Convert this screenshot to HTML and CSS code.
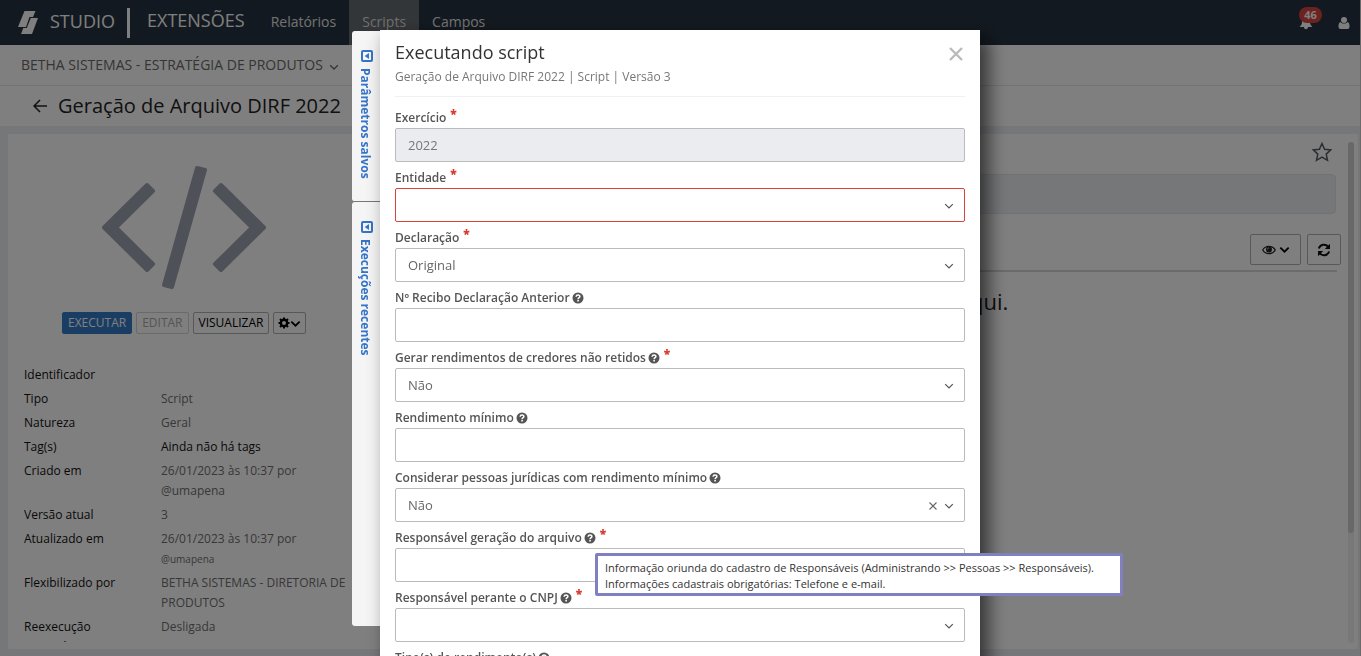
FILE: index.html
```html
<!DOCTYPE html>
<html lang="pt-BR">
<head>
<meta charset="utf-8">
<title>Studio Extensões</title>
<link rel="stylesheet" href="styles.css">
</head>
<body>
<svg class="defs" aria-hidden="true">
  <symbol id="chevron" viewBox="0 0 10 10"><path d="M1.200 3.200 5 7l3.800-3.800" fill="none" stroke="currentColor"/></symbol>
  <symbol id="help" viewBox="0 0 12 12"><circle cx="6" cy="6" r="5.500" fill="currentColor"/><path d="M4.100 4.700C4.200 2.500 8 2.500 7.900 4.600 7.800 5.800 6.100 5.700 6.100 7.200" fill="none" stroke="#fff" stroke-width="1.500"/><rect x="5.300" y="8" width="1.600" height="1.500" fill="#fff"/></symbol>
  <symbol id="panel" viewBox="0 0 12 12"><rect x="1" y="1" width="10" height="10" rx="1" fill="none" stroke="currentColor" stroke-width="2"/><path d="M8 3v6L3.700 6z" fill="currentColor"/></symbol>
</svg>
<div class="app">
  <header class="topbar">
    <svg class="logo" viewBox="0 0 20 24"><path d="M6.500 0H17.500L15 6H11.500L8 16H0z M12.800 7H20L14 23H3l2.300-6h3.500z" fill="#fff"/></svg>
    <span class="brand">STUDIO</span>
    <span class="product">EXTENSÕES</span>
    <nav class="nav">
      <a href="#">Relatórios</a>
      <a href="#" class="current">Scripts</a>
      <a href="#">Campos</a>
    </nav>
    <button class="bell" aria-label="Notificações">
      <svg viewBox="0 0 14 14"><path d="M7 1c3 0 4 2 4 4.500 0 3 1 4 2.500 5.500H.5C2 9.500 3 8.500 3 5.500 3 3 4 1 7 1zM5 11h4c0 3-4 3-4 0z" fill="#fff"/></svg>
      <span class="badge">46</span>
    </button>
    <button class="user" aria-label="Usuário"><svg viewBox="0 0 12 12"><circle cx="6" cy="3" r="3" fill="#fff"/><path d="M2.500 5c-2 .5-2 3-2 4.500C.5 11 1 12 2.500 12h7c1.500 0 2-1 2-2.500 0-1.500 0-4-2-4.500-1.500 2-5.500 2-7 0z" fill="#fff"/></svg></button>
  </header>
  <div class="entity">BETHA SISTEMAS - ESTRATÉGIA DE PRODUTOS <svg><use href="#chevron"/></svg></div>
  <div class="heading">
    <a href="#" aria-label="Voltar"><svg viewBox="0 0 14 14"><path d="M7 1 1 7l6 6M1 7h13" fill="none" stroke="currentColor" stroke-width="1.500"/></svg></a>
    <h1>Geração de Arquivo DIRF 2022</h1>
  </div>
  <main class="content">
    <section class="summary">
      <svg class="code" viewBox="0 0 164 123"><g fill="#9ea3b3" stroke="#9ea3b3" stroke-width="4" stroke-linejoin="round"><path d="M45 19 2 61.500 45 104l6-6L14 61.500 51 25zM119 19l43 42.500L119 104l-6-6 37-36.500L113 25zM95 2l8 2-33 117-8-2z"/></g></svg>
      <div class="actions">
        <button class="btn primary">EXECUTAR</button>
        <button class="btn" disabled>EDITAR</button>
        <button class="btn">VISUALIZAR</button>
        <button class="btn gear" aria-label="Opções"><svg viewBox="0 0 12 12"><circle cx="6" cy="6" r="3.200" fill="none" stroke="#000" stroke-width="2.400"/><path d="M6 .5v2M6 9.500v2M.5 6h2M9.500 6h2M2 2l1.500 1.500M8.500 8.500 10 10M10 2 8.500 3.500M3.500 8.500 2 10" stroke="#000" stroke-width="2"/></svg><svg class="bold"><use href="#chevron"/></svg></button>
      </div>
      <dl class="details">
        <dt>Identificador</dt><dd></dd>
        <dt>Tipo</dt><dd>Script</dd>
        <dt>Natureza</dt><dd>Geral</dd>
        <dt>Tag(s)</dt><dd class="strong">Ainda não há tags</dd>
        <dt>Criado em</dt><dd>26/01/2023 às 10:37 por<br>@umapena</dd>
        <dt>Versão atual</dt><dd>3</dd>
        <dt>Atualizado em</dt><dd>26/01/2023 às 10:37 por<br><small>@umapena</small></dd>
        <dt>Flexibilizado por</dt><dd>BETHA SISTEMAS - DIRETORIA DE PRODUTOS</dd>
        <dt>Reexecução automática</dt><dd>Desligada</dd>
      </dl>
    </section>
    <section class="results">
      <div class="results-main">
        <button class="star" aria-label="Favoritar"><svg viewBox="0 0 20 20"><path d="m10 1.500 2.600 5.700 6.200.7-4.600 4.200 1.300 6.200L10 15.200l-5.500 3.100 1.300-6.200L1.200 7.900l6.200-.7z" fill="none" stroke="#555b6b" stroke-width="1.500"/></svg></button>
        <div class="notice"></div>
        <div class="tools">
          <button class="tool eye" aria-label="Exibir"><svg viewBox="0 0 14 10"><path d="M.7 5C3.500.2 10.500.2 13.300 5 10.500 9.800 3.500 9.800.7 5z" fill="none" stroke="#222" stroke-width="1.200"/><circle cx="7" cy="4.500" r="3" fill="#222"/><path d="M5.500 4.500C5.500 3.500 6 3 7 3" fill="none" stroke="#fff" stroke-width=".7"/></svg><svg class="bold"><use href="#chevron"/></svg></button>
          <button class="tool" aria-label="Atualizar"><svg class="refresh" viewBox="0 0 14 14"><path d="M1.800 5.500C3.200 1.200 8.500.7 11.200 3.600M12.200 8.500C10.800 12.800 5.500 13.300 2.800 10.400" fill="none" stroke="#111" stroke-width="2"/><path d="M13 .8v5.200H7.800zM1 13.200V8h5.200z" fill="#111"/></svg></button>
        </div>
        <p class="empty">aqui.</p>
      </div>
      <div class="track"><div class="thumb"></div></div>
    </section>
  </main>
</div>

<div class="overlay">
  <div class="dialog-wrap">
    <div class="side">
      <button><svg><use href="#panel"/></svg><span>Parâmetros salvos</span></button>
      <button class="recent"><svg><use href="#panel"/></svg><span>Execuções recentes</span></button>
    </div>
    <form class="dialog" role="dialog" aria-labelledby="dlg-title">
      <header class="dialog-head">
        <div><h2 id="dlg-title">Executando script</h2><p>Geração de Arquivo DIRF 2022 | Script | Versão 3</p></div>
        <button type="button" class="close" aria-label="Fechar"><svg viewBox="0 0 14 14"><path d="m1 1 12 12M13 1 1 13" stroke="#bbb" stroke-width="2.400"/></svg></button>
      </header>
      <div class="field"><label for="f1">Exercício <b>*</b></label><input id="f1" value="2022" disabled></div>
      <div class="field"><label for="f2">Entidade <b>*</b></label><div class="pick"><select id="f2" class="invalid"><option></option></select><svg><use href="#chevron"/></svg></div></div>
      <div class="field"><label for="f3">Declaração <b>*</b></label><div class="pick"><select id="f3"><option>Original</option></select><svg><use href="#chevron"/></svg></div></div>
      <div class="field"><label for="f4">Nº Recibo Declaração Anterior <svg><use href="#help"/></svg></label><input id="f4"></div>
      <div class="field"><label for="f5">Gerar rendimentos de credores não retidos <svg><use href="#help"/></svg> <b>*</b></label><div class="pick"><select id="f5"><option>Não</option></select><svg><use href="#chevron"/></svg></div></div>
      <div class="field"><label for="f6">Rendimento mínimo <svg><use href="#help"/></svg></label><input id="f6"></div>
      <div class="field"><label for="f7">Considerar pessoas jurídicas com rendimento mínimo <svg><use href="#help"/></svg></label><div class="pick"><select id="f7"><option>Não</option></select><button type="button" class="clear" aria-label="Limpar"><svg viewBox="0 0 8 8"><path d="m.5.5 7 7M7.500.5l-7 7" stroke="#666" stroke-width="1.100"/></svg></button><svg><use href="#chevron"/></svg></div></div>
      <div class="field"><label for="f8">Responsável geração do arquivo <svg><use href="#help"/></svg> <b>*</b></label><div class="pick"><select id="f8"><option></option></select><svg><use href="#chevron"/></svg>
        <div class="tooltip" role="tooltip">Informação oriunda do cadastro de Responsáveis (Administrando &gt;&gt; Pessoas &gt;&gt; Responsáveis).<br>Informações cadastrais obrigatórias: Telefone e e-mail.</div></div></div>
      <div class="field"><label for="f9">Responsável perante o CNPJ <svg><use href="#help"/></svg> <b>*</b></label><div class="pick"><select id="f9"><option></option></select><svg><use href="#chevron"/></svg></div></div>
      <div class="field"><label for="f10">Tipo(s) de rendimento(s) <svg><use href="#help"/></svg></label><input id="f10"></div>
    </form>
  </div>
</div>
</body>
</html>
```

FILE: styles.css
```css
* { box-sizing: border-box; }
body {
  margin: 0;
  height: 100vh;
  overflow: hidden;
  font: 12px/20px "Open Sans", "Noto Sans", sans-serif;
  color: #222;
}
button, input, select { font: inherit; }
button { padding: 0; border: 0; background: none; }
h1, h2, p, dl, dd { margin: 0; font-weight: 400; }
a { color: inherit; text-decoration: none; }
.defs { position: absolute; width: 0; height: 0; }

.app { display: flex; flex-direction: column; height: 100vh; background: #eceef2; border-right: 1px solid #d4d4d4; }

.topbar { display: flex; flex: none; height: 45px; align-items: center; background: #263340; color: #fff; padding: 0 10px 0 18px; }
.logo { width: 20px; height: 24px; margin-right: 12px; }
.brand { font-size: 18px; padding: 0 12px 4px 0; line-height: 26px; border-right: 3px solid #fff; }
.product { font-size: 18px; padding: 0 13px 6px 17px; }
.nav { display: flex; flex: 1; height: 100%; font-size: 14px; color: #e4e4e4; }
.nav a { padding: 12px 13px 0; }
.nav .current { background: #676c71; color: #ddd; }
.bell { position: relative; margin-right: 25px; }
.bell svg { display: block; width: 14px; height: 14px; }
.badge { position: absolute; top: -9px; left: 0; width: 23px; height: 16px; border-radius: 8px; background: #d9453d; color: #fff; font-size: 11px; font-weight: 700; line-height: 16px; }
.user svg { display: block; width: 12px; height: 12px; }

.entity { flex: none; height: 41px; padding: 10px 21px; background: #fff; border-bottom: 1px solid #e4e6ea; font-size: 14px; color: #6a6a6a; }
.entity svg { width: 10px; height: 10px; margin-left: 2px; vertical-align: -2px; stroke-width: 1.3px; }
.heading { flex: none; display: flex; height: 40px; align-items: center; gap: 11px; padding-left: 33px; background: #fff; }
.heading a, .heading a svg { display: block; width: 14px; height: 14px; }
h1 { font-size: 20px; line-height: 26px; }

.content { flex: 1; min-height: 0; display: flex; gap: 8px; padding: 8px 2px 7px 8px; }
.summary, .results { background: #fff; border-radius: 2px; overflow: hidden; }
.summary { flex: none; width: 376px; padding: 32px 28px 0 16px; }
.code { display: block; width: 164px; height: 123px; margin-left: 78px; }
.actions { display: flex; gap: 4px; margin: 23px 0 0 38px; }
.btn { height: 22px; padding: 0 5px; border: 1px solid #b0b0b0; border-radius: 2px; line-height: 18px; color: #000; display: flex; align-items: center; }
.btn.primary { background: #337ac7; border-color: #337ac7; color: #fff; }
.btn:disabled { border-color: #d4d4d4; color: #aaa; }
.btn.gear { padding: 0 4px; }
.gear svg { width: 12px; height: 12px; }
svg.bold { width: 11px; height: 11px; stroke-width: 1.6px; }
.details { display: grid; grid-template-columns: 137px 1fr; row-gap: 4px; margin-top: 31px; height: 277px; overflow: hidden; color: #707070; }
.details dt, .details .strong { color: #111; }
.details dt { padding-right: 40px; }
.details small { font-size: 10px; }

.results { flex: 1; display: flex; padding: 8px 4px 6px 16px; }
.results-main { flex: 1; padding-right: 8px; }
.star { display: block; margin: 0 8px 0 auto; height: 20px; }
.star svg { display: block; width: 20px; height: 20px; }
.notice { height: 40px; margin: 12px 4px 20px 0; border: 1px solid #e2e5e9; border-radius: 4px; background: #eceef2; }
.tools { display: flex; justify-content: flex-end; gap: 6px; height: 38px; margin-right: 3px; border-bottom: 2px solid #d6d6da; }
.tool { display: flex; align-items: center; justify-content: center; gap: 3px; width: 34px; height: 31px; border: 1px solid #b0b0b0; border-radius: 2px; }
.tool:last-child { margin-right: -4px; }
.tool.eye { width: 51px; }
.eye svg:first-child { width: 14px; height: 10px; }
.refresh { width: 14px; height: 14px; }
.empty { margin-top: 14px; padding-left: 59%; font-size: 22px; line-height: 30px; }
.track { width: 6px; border-radius: 3px; background: #f0f0f0; }
.thumb { height: 78%; border-radius: 3px; background: #d0d0d0; }

.overlay { position: fixed; inset: 0; overflow: hidden; background: rgba(0, 0, 0, .5); padding: 30px 1px 0 0; stroke-width: 1.2px; }
.dialog-wrap { position: relative; width: 600px; margin: 0 auto; }
.side { position: absolute; right: 100%; top: 1px; width: 28px; }
.side button { display: flex; align-items: center; gap: 6px; width: 28px; height: 171px; padding: 19px 0 0 2px; writing-mode: vertical-rl; background: #f5f5f5; color: #3574c8; border-radius: 3px 0 0 3px; border-bottom: 1px solid #777; font-size: 12px; font-weight: 700; line-height: 16px; }
.side .recent { height: 424px; border-bottom: 0; }
.side svg { flex: none; width: 12px; height: 12px; }
.side span { padding-right: 4px; }
.dialog { position: relative; background: #fff; padding: 8px 15px; box-shadow: 10px 8px 16px rgba(0, 0, 0, .5), 0 5px 15px rgba(0, 0, 0, .15); color: #555; }
.dialog-head { display: flex; justify-content: space-between; height: 59px; border-bottom: 1px solid #f0f1f7; }
h2 { font-size: 18px; line-height: 28px; color: #333; }
.dialog-head p { margin-top: 1px; color: #777; }
.close { width: 14px; height: 14px; margin: 9px 2px 0 0; }
.close svg { display: block; width: 14px; height: 14px; }
.field label { display: flex; align-items: center; gap: 2px; height: 26px; padding-top: 6px; font-weight: 600; line-height: 20px; }
.dialog-head + .field { margin-top: 5px; }
.field label svg { width: 12px; height: 12px; }
.field b { color: #d9352c; font-size: 12px; height: 28px; padding-left: 2px; }
.field input, .field select { display: block; width: 100%; height: 34px; padding: 0 12px; border: 1px solid #bbb; border-radius: 2px; background: #fff; color: #666; font-size: 13px; appearance: none; }
.field input:disabled { background: #ebecf0; color: #777; }
.field select.invalid { border-color: #d9433a; }
.pick { position: relative; }
.pick > svg { position: absolute; right: 11px; top: 13px; width: 10px; height: 10px; color: #555; pointer-events: none; }
.clear { position: absolute; right: 28px; top: 14px; width: 8px; height: 8px; }
.clear svg { display: block; width: 8px; height: 8px; }
.tooltip { position: absolute; z-index: 2; left: 200px; top: 5px; min-width: 528px; padding: 4px 7px 1px; border: 3px solid #8080c0; border-radius: 2px; background: #fff; color: #333; font-size: 11px; line-height: 16px; white-space: nowrap; }
```
